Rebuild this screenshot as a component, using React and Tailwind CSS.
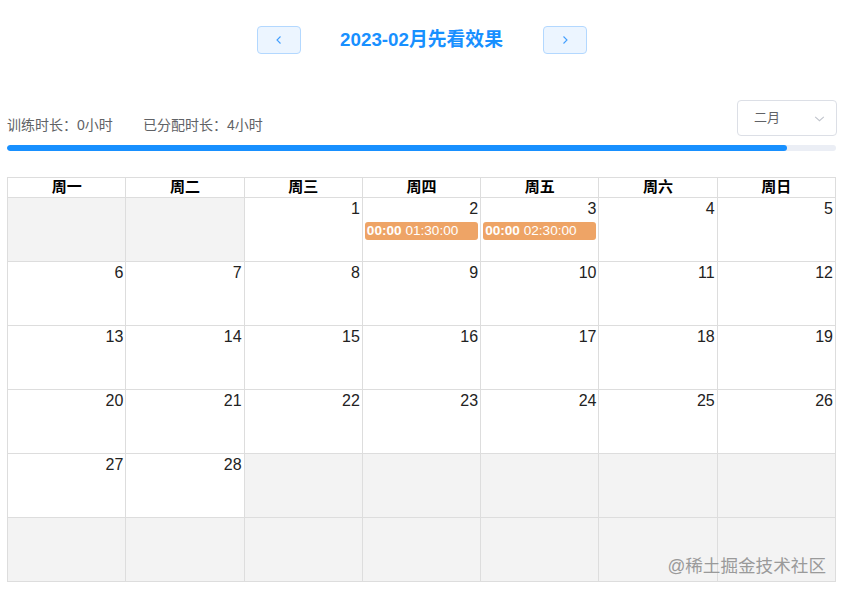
import { useState } from 'react';

const weekNames = ['周一', '周二', '周三', '周四', '周五', '周六', '周日'];

const events = {
  2: { start: '00:00', end: '01:30:00' },
  3: { start: '00:00', end: '02:30:00' },
};

// Feb 2023 starts on Wednesday, 28 days, 6 rows
const buildCells = () => {
  const cells = [];
  for (let i = 0; i < 42; i++) {
    const day = i - 1;
    cells.push(day >= 1 && day <= 28 ? day : null);
  }
  return cells;
};

const App = () => {
  const [month] = useState('二月');
  const cells = buildCells();
  const rows = [];
  for (let r = 0; r < 6; r++) rows.push(cells.slice(r * 7, r * 7 + 7));

  return (
    <div
      className="relative w-[843px] h-[593px] bg-white overflow-hidden"
      style={{ fontFamily: '"Liberation Sans", Arial, "Noto Sans CJK SC", sans-serif' }}
    >
      <div className="flex items-center justify-center pt-[26px] h-[54px]">
        <button className="w-[44px] h-[28px] rounded border border-[#b3d8ff] bg-[#ecf5ff] text-[#409eff] flex items-center justify-center">
          <svg width="10" height="10" viewBox="0 0 10 10" fill="none" stroke="currentColor" strokeWidth="1.1">
            <path d="M6.5 1.5 3 5l3.5 3.5" />
          </svg>
        </button>
        <div className="w-[242px] text-center text-[18.8px] font-bold text-[#1890ff]">2023-02月先看效果</div>
        <button className="w-[44px] h-[28px] rounded border border-[#b3d8ff] bg-[#ecf5ff] text-[#409eff] flex items-center justify-center">
          <svg width="10" height="10" viewBox="0 0 10 10" fill="none" stroke="currentColor" strokeWidth="1.1">
            <path d="M3.5 1.5 7 5 3.5 8.5" />
          </svg>
        </button>
      </div>

      <div className="px-[7px] mt-[46px]">
        <div className="flex items-end justify-between h-[36px]">
          <div className="flex text-[14px] text-[#606266] pb-[0px]">
            <span className="w-[136px] whitespace-nowrap">训练时长：0小时</span>
            <span className="whitespace-nowrap">已分配时长：4小时</span>
          </div>
          <div className="w-[100px] h-[36px] border border-[#dcdfe6] rounded flex items-center justify-between pl-[16px] pr-[10px] text-[13px] text-[#606266] mr-[-1px]">
            <span>{month}</span>
            <svg width="13" height="13" viewBox="0 0 12 12" fill="none" stroke="#c0c4cc" strokeWidth="1">
              <path d="M2 4.5 6 8l4-3.5" />
            </svg>
          </div>
        </div>
        <div className="mt-[9px] h-[6px] rounded-full bg-[#ebeef5] overflow-hidden">
          <div className="h-full rounded-full bg-[#1890ff]" style={{ width: '94.1%' }} />
        </div>

        <div className="mt-[26px] border-t border-l border-[#dddddd]">
          <div className="grid grid-cols-7">
            {weekNames.map((w) => (
              <div
                key={w}
                className="h-[20px] border-r border-b border-[#dddddd] text-center text-[15px] font-bold text-black leading-[18px]"
              >
                {w}
              </div>
            ))}
          </div>
          {rows.map((row, ri) => (
            <div key={ri} className="grid grid-cols-7">
              {row.map((day, ci) => (
                <div
                  key={ci}
                  className={`h-[64px] border-r border-b border-[#dddddd] ${day ? 'bg-white' : 'bg-[#f3f3f3]'}`}
                >
                  {day && (
                    <div className="flex flex-col">
                      <div className="text-right pr-[2px] pt-[1px] text-[16px] text-[#222] leading-[20px]">{day}</div>
                      {events[day] && (
                        <div className="mx-[2px] mt-[3px] h-[18px] rounded-[3px] bg-[#eea466] text-white text-[13.6px] leading-[18px] px-[2px] whitespace-nowrap">
                          <span className="font-bold">{events[day].start}</span> {events[day].end}
                        </div>
                      )}
                    </div>
                  )}
                </div>
              ))}
            </div>
          ))}
        </div>
      </div>

      <div className="absolute right-[17px] top-[553px] text-[17.6px] text-[#9a9a9a] whitespace-nowrap">
        @稀土掘金技术社区
      </div>
    </div>
  );
};

export default App;
